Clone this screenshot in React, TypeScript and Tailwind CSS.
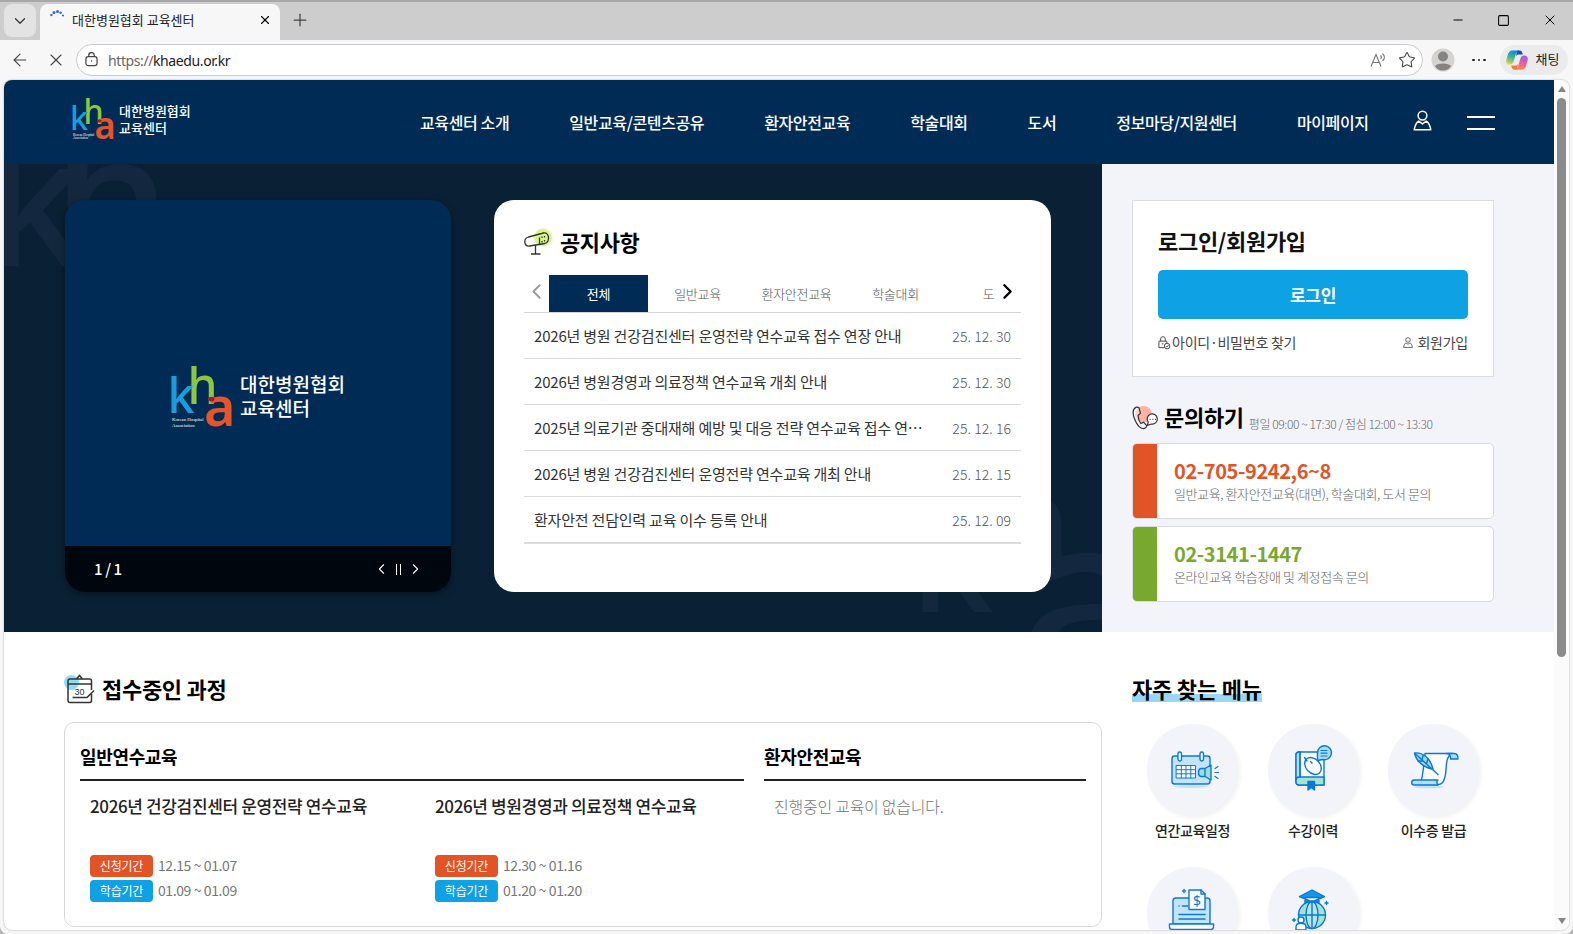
import { ReactNode, useState } from 'react';
import clsx from 'clsx';
import {
  ArrowLeft,
  ChevronDown,
  ChevronLeft,
  ChevronRight,
  Minus,
  Plus,
  Square,
  Star,
  X
} from 'lucide-react';

const navItems = [
  '교육센터 소개',
  '일반교육/콘텐츠공유',
  '환자안전교육',
  '학술대회',
  '도서',
  '정보마당/지원센터',
  '마이페이지'
];

const noticeTabs = ['전체', '일반교육', '환자안전교육', '학술대회', '도서'];

const notices = [
  { title: '2026년 병원 건강검진센터 운영전략 연수교육 접수 연장 안내', date: '25. 12. 30' },
  { title: '2026년 병원경영과 의료정책 연수교육 개최 안내', date: '25. 12. 30' },
  { title: '2025년 의료기관 중대재해 예방 및 대응 전략 연수교육 접수 연⋯', date: '25. 12. 16' },
  { title: '2026년 병원 건강검진센터 운영전략 연수교육 개최 안내', date: '25. 12. 15' },
  { title: '환자안전 전담인력 교육 이수 등록 안내', date: '25. 12. 09' }
];

const courses = [
  { title: '2026년 건강검진센터 운영전략 연수교육', apply: '12.15 ~ 01.07', study: '01.09 ~ 01.09' },
  { title: '2026년 병원경영과 의료정책 연수교육', apply: '12.30 ~ 01.16', study: '01.20 ~ 01.20' }
];

function UserIcon({ className }: { className?: string }) {
  return (
    <svg viewBox="0 0 20 22" className={className} fill="none" stroke="currentColor" strokeWidth="1.6">
      <circle cx="10" cy="5.8" r="4.6" />
      <path d="M6 11.600C3.600 13 2.200 15.600 1.200 20.800h17.600c-1-5.200-2.400-7.800-4.800-9.200L10 14.600z" strokeLinejoin="round" />
    </svg>
  );
}

function KhaMark({ className }: { className?: string }) {
  return (
    <svg viewBox="0 0 61 62" className={className} overflow="visible" fontFamily="'Noto Sans', sans-serif" fontWeight="500">
      <text transform="translate(15.500 39) scale(0.94 1)" fontSize="51" fill="#8dc63f">
        h
      </text>
      <text transform="translate(-4.500 48) scale(0.98 1)" fontSize="49" fill="#1b9ddb">
        k
      </text>
      <text transform="translate(32 61) scale(0.98 1)" fontSize="55" fontWeight="600" fill="#e4552a">
        a
      </text>
      <ellipse cx="39.500" cy="34" rx="3" ry="2.300" fill="#b5121b" />
      <g fontFamily="'Liberation Serif', serif" fontSize="4.800" fill="#fff">
        <text x="0" y="56">Korean Hospital</text>
        <text x="0" y="61.500">Association</text>
      </g>
    </svg>
  );
}

function TitleBar() {
  return (
    <div className="flex h-10 shrink-0 border-t-2 border-[#a9a7ac] bg-[#cdcdcd]">
      <div className="mt-0.5 ml-1 flex h-[33px] w-8 items-center justify-center rounded-lg bg-[#e3e3e3]">
        <ChevronDown className="h-[18px] w-[18px] text-[#333]" strokeWidth={1.6} />
      </div>
      <div className="mt-0.5 ml-1 flex h-9 w-60 items-center rounded-t-lg bg-[#f7f7f7] pl-2.5 pb-1">
        <svg viewBox="0 0 16 16" className="-mt-1.5 h-4 w-4" fill="#2f6fd0">
          <circle cx="1.400" cy="6" r="1.200" />
          <circle cx="4" cy="3.500" r="1.500" />
          <circle cx="7.500" cy="2.600" r="1.500" />
          <circle cx="10.600" cy="3.800" r="1.300" />
          <circle cx="13" cy="6.500" r="1.100" />
        </svg>
        <span className="ml-1.5 flex-1 text-[13px] text-[#222]">대한병원협회 교육센터</span>
        <X className="mr-2 h-3.5 w-3.5 text-black" strokeWidth={2} />
      </div>
      <Plus className="mt-2 ml-2.5 h-5 w-5 text-[#444]" strokeWidth={1.5} />
      <div className="ml-auto flex items-center gap-8 pr-[15px] pb-0.5 text-black">
        <Minus className="h-3.5 w-3.5" strokeWidth={1.7} />
        <Square className="h-[13px] w-[13px]" strokeWidth={1.9} />
        <X className="h-4 w-4" strokeWidth={1.5} />
      </div>
    </div>
  );
}

function AddressBar() {
  return (
    <div className="flex h-10 shrink-0 items-center bg-[#f7f7f7] text-[#444]">
      <ArrowLeft className="ml-2.5 h-5 w-5" strokeWidth={1.3} />
      <X className="ml-4 h-5 w-5" strokeWidth={1.3} />
      <div className="ml-2.5 flex h-8 w-[1347px] items-center rounded-full border border-[#c9cdd3] bg-white px-2">
        <svg viewBox="0 0 14 16" className="-mt-0.5 h-[15px] w-[13px]" fill="none" stroke="currentColor" strokeWidth="1.300">
          <rect x="1" y="5" width="12" height="9.500" rx="2.500" />
          <path d="M4 5V3.500a3 3 0 0 1 6 0V5" />
          <circle cx="7" cy="9.700" r=".8" fill="currentColor" stroke="none" />
        </svg>
        <span className="ml-2.5 font-['Noto_Sans'] text-[14px] tracking-[-0.4px] text-[#222]">
          <span className="text-[#666]">https://</span>khaedu.or.kr
        </span>
        <svg viewBox="0 0 18 16" className="ml-auto h-4 w-[18px] text-[#777]" fill="none" stroke="currentColor" strokeWidth="1.100">
          <path d="M1 14.500 6 2.500l5 12M2.700 10.500h6.600M10.500 3.500c1 1 1 2.500 0 3.500M12.500 1.500c2.500 2 2.500 5.500 0 7.500" />
        </svg>
        <Star className="-mr-0.5 ml-2.5 h-[18px] w-[18px]" strokeWidth={1.4} />
      </div>
      <svg viewBox="0 0 24 24" className="ml-2 h-6 w-6">
        <circle cx="12" cy="12" r="11.500" fill="#d5d3d0" />
        <circle cx="12" cy="8.500" r="5" fill="#868482" />
        <path d="M4 18c2-3.500 14-3.500 16 0-3 6-13 6-16 0z" fill="#868482" />
      </svg>
      <div className="ml-[17px] flex gap-[3px]">
        <i className="h-[2.500px] w-[2.500px] rounded-full bg-[#222]" />
        <i className="h-[2.500px] w-[2.500px] rounded-full bg-[#222]" />
        <i className="h-[2.500px] w-[2.500px] rounded-full bg-[#222]" />
      </div>
      <div className="ml-3.5 flex h-[30px] w-[68px] items-center rounded-full bg-[#ebebeb] pl-1.5">
        <svg viewBox="0 0 24 24" className="h-[22px] w-[22px]">
          <defs>
            <linearGradient id="cp1" x1="0.600" y1="0" x2="0.300" y2="1">
              <stop offset="0" stopColor="#1285d8" />
              <stop offset=".5" stopColor="#35b8a0" />
              <stop offset="1" stopColor="#f4d03f" />
            </linearGradient>
            <linearGradient id="cp2" x1="0.700" y1="0" x2="0.300" y2="1">
              <stop offset="0" stopColor="#8a63e8" />
              <stop offset=".5" stopColor="#ee5c9c" />
              <stop offset="1" stopColor="#ff8a4a" />
            </linearGradient>
          </defs>
          <path d="M7 1.500h7.500c-3 1-4 4-5 8-1.200 4.500-2 7.500-5 7.500C.5 17-.5 14.500.7 10.500l1.500-5C3 3 4.500 1.500 7 1.500z" fill="url(#cp1)" />
          <path d="M12.500 1.500h2.500c2 0 2.600 1.500 3.300 4.500H14c-1.500 0-2.500.5-3.300 2z" fill="#1c4fc4" />
          <path d="M17 22.500H9.500c3-1 4-4 5-8 1.200-4.500 2-7.500 5-7.500 4 0 5 2.500 3.800 6.500l-1.500 5c-.8 2.500-2.300 4-4.800 4z" fill="url(#cp2)" />
          <path d="M11.500 22.500H9c-2 0-2.600-1.500-3.300-4.500H10c1.500 0 2.500-.5 3.300-2z" fill="#f47a3c" />
        </svg>
        <span className="-mt-0.5 ml-2 text-[13px] text-[#222]">채팅</span>
      </div>
    </div>
  );
}

function SiteHeader() {
  return (
    <header className="flex h-[84px] items-center bg-[#002b55] text-white">
      <div className="ml-[69px] flex w-[347px] items-center">
        <KhaMark className="-mt-1.5 h-[42px] w-[41px]" />
        <div className="-mt-[7px] ml-[5px] text-[13px] leading-[17px] font-medium">
          대한병원협회
          <br />
          교육센터
        </div>
      </div>
      <nav className="flex gap-[60px] text-[16px] font-medium tracking-[-0.38px] whitespace-nowrap">
        {navItems.map((item) => (
          <a key={item} href="#">
            {item}
          </a>
        ))}
      </nav>
      <UserIcon className="-mt-[3px] ml-[44px] h-[21px] w-[19px]" />
      <button className="mt-px ml-[35px] flex h-[14px] w-[28px] flex-col justify-between">
        <span className="h-0.5 w-full bg-white" />
        <span className="h-0.5 w-full bg-white" />
      </button>
    </header>
  );
}

// Oversized wordmark that shows faintly behind the hero cards
function HeroWatermark() {
  return (
    <svg
      viewBox="0 0 1098 468"
      className="absolute inset-0 h-full w-full"
      fill="#13283f"
      fontFamily="'Noto Sans', sans-serif"
      fontWeight="500"
    >
      <text x="-19" y="102" fontSize="180">k</text>
      <text x="48" y="104" fontSize="190">h</text>
      <text x="906" y="448" fontSize="150">k</text>
      <text x="975" y="414" fontSize="150">h</text>
      <text x="1016" y="515" fontSize="230">a</text>
    </svg>
  );
}

function BannerCard() {
  return (
    <section className="relative flex h-[392px] w-[386px] flex-col overflow-hidden rounded-[20px] bg-[#002b55] text-white shadow-[0_2px_8px_rgba(0,0,0,0.45)]">
      <div className="mt-[165px] ml-[107px] flex items-center">
        <KhaMark className="h-[62px] w-[61px]" />
        <div className="-mt-px ml-[7px] text-[19px] leading-[24px] font-medium">
          대한병원협회
          <br />
          교육센터
        </div>
      </div>
      <div className="mt-auto flex h-[46px] items-center bg-[#00060d] pr-[27px] pl-[29px] text-[15px] font-medium">
        <span className="tracking-[-0.4px]">1 / 1</span>
        <div className="ml-auto flex items-center">
          <ChevronLeft className="h-5 w-[17px]" strokeWidth={1.5} />
          <div className="flex w-[17px] justify-center gap-[3px]">
            <span className="h-[11px] w-px bg-white" />
            <span className="h-[11px] w-px bg-white" />
          </div>
          <ChevronRight className="h-5 w-[17px]" strokeWidth={1.5} />
        </div>
      </div>
    </section>
  );
}

function NoticeCard() {
  const [activeTab, setActiveTab] = useState('전체');

  return (
    <section className="relative ml-[43px] h-[392px] w-[557px] rounded-[20px] bg-white px-[30px] pt-[26px]">
      <div className="flex h-8 items-center">
        <svg viewBox="0 0 28 28" className="h-7 w-7" fill="none" stroke="#333" strokeWidth="1.300">
          <circle cx="19" cy="9.500" r="9" fill="#dcf58a" stroke="none" />
          <path d="M4.500 9 19.500 5c6-1.300 6.800 8.800 1.300 10.500L5.500 18c-5.500.6-6.500-7.400-1-9zM15.500 9.500v6M18 8.500v1.500M18 13v1.500M20.500 8v1.500M20.500 12v1.500M11.500 17.500V26M7 26h9.500" />
        </svg>
        <h2 className="-mt-0.5 ml-2 text-[22px] font-bold tracking-[-0.4px]">공지사항</h2>
      </div>
      <div className="mt-[17px] flex h-[38px] items-center border-b border-[#d5d5d5] text-[13px] font-light tracking-[-0.3px] text-[#555]">
        <ChevronLeft className="-mt-1 h-[25px] w-[25px] text-[#999]" strokeWidth={1.8} />
        <div className="flex h-full w-[446px] overflow-hidden">
          {noticeTabs.map((tab) => (
            <button
              key={tab}
              onClick={() => setActiveTab(tab)}
              className={clsx(
                'h-full w-[99px] shrink-0',
                tab === activeTab && 'bg-[#002b55] font-normal text-white'
              )}
            >
              {tab}
            </button>
          ))}
        </div>
        <ChevronRight className="-mt-1 h-[25px] w-[25px] text-black" strokeWidth={2.3} />
      </div>
      <ul className="border-b border-[#dcdcdc]">
        {notices.map((n) => (
          <li key={n.title} className="flex h-[46px] items-center border-b border-[#dcdcdc] pt-0.5 pr-2.5 pl-2.5">
            <span className="text-[15px] tracking-[-0.2px] whitespace-nowrap text-[#333]">{n.title}</span>
            <span className="ml-auto text-[14px] font-light tracking-[0.05px] text-[#555]">{n.date}</span>
          </li>
        ))}
      </ul>
    </section>
  );
}

function ContactRow({ phone, desc, bar, text }: { phone: string; desc: string; bar: string; text: string }) {
  return (
    <div className="flex h-[76px] overflow-hidden rounded-[5px] border border-[#d9dade] bg-white">
      <div className={clsx('w-6', bar)} />
      <div className="ml-[17px] pt-3">
        <p className={clsx('text-[20px] leading-[30px] font-bold tracking-[-0.4px]', text)}>{phone}</p>
        <p className="text-[13px] leading-[15px] font-light tracking-[-0.4px] text-[#666]">{desc}</p>
      </div>
    </div>
  );
}

function SidePanel() {
  return (
    <aside className="w-[452px] bg-[#f3f4f9] pt-9 pl-[30px]">
      <div className="h-[177px] w-[362px] border border-[#dcdde1] bg-white px-[25px] pt-[23px]">
        <h2 className="text-[22px] leading-8 font-bold tracking-[-0.3px] text-[#111]">로그인/회원가입</h2>
        <button className="mt-3.5 h-[49px] w-full rounded-[5px] bg-[#0ea1e4] text-[17px] font-bold tracking-[-0.3px] text-white">
          로그인
        </button>
        <div className="mt-[13px] flex items-center text-[14px] tracking-[-0.25px] text-[#444]">
          <svg viewBox="0 0 14 15" className="h-[14px] w-[13px]" fill="none" stroke="currentColor">
            <path d="M7 12.500H1V5.500h8.500V8M2.800 5.500V3.200a2.500 2.500 0 0 1 5 0v2.300" />
            <circle cx="9.800" cy="10.800" r="3" />
            <path d="m8.500 10.800 1 1 1.800-2M4 8.500h2" />
          </svg>
          <a href="#" className="ml-px">아이디·비밀번호 찾기</a>
          <UserIcon className="ml-auto h-[11px] w-[10px]" />
          <a href="#" className="ml-1">회원가입</a>
        </div>
      </div>
      <div className="mt-[26px] flex h-[30px] items-center">
        <svg viewBox="0 0 28 26" className="h-6 w-[27px]" fill="none" stroke="#333" strokeWidth="1.300">
          <circle cx="12" cy="9" r="9" fill="#fdb3a1" stroke="none" />
          <path d="M3.500 1.500C0 3.500 0 9 2.500 15s6 10 10 9.500c1.500-.3 2.500-1.500 3-3l-3.500-4-3 1.500C7 16.500 6 13 6 10l2.500-2L7 2C6 1 5 .8 3.500 1.500z" fill="#f3f4f9" fillOpacity=".5" />
          <path d="M17 17.500a5.500 5.500 0 1 1 3.500 2L16 21z" fill="#fff" />
          <path d="M18.500 14.500h1M21.500 14.500h1M24.300 14.500h1" />
        </svg>
        <h2 className="-mt-1 ml-[5px] text-[22px] font-bold tracking-[-0.3px]">문의하기</h2>
        <span className="mt-3 ml-[5px] text-[12px] font-light tracking-[-0.4px] text-[#666]">
          평일 09:00 ~ 17:30 / 점심 12:00 ~ 13:30
        </span>
      </div>
      <div className="mt-2.5 flex w-[362px] flex-col gap-[7px]">
        <ContactRow
          phone="02-705-9242,6~8"
          desc="일반교육, 환자안전교육(대면), 학술대회, 도서 문의"
          bar="bg-[#e25426]"
          text="text-[#e25426]"
        />
        <ContactRow
          phone="02-3141-1447"
          desc="온라인교육 학습장애 및 계정접속 문의"
          bar="bg-[#78a92d]"
          text="text-[#78a92d]"
        />
      </div>
    </aside>
  );
}

function Period({ label, color, value }: { label: string; color: string; value: string }) {
  return (
    <div className="flex items-center">
      <span
        className={clsx(
          'flex h-[22px] w-[63px] items-center justify-center rounded-[4px] text-[12px] tracking-[-0.2px] text-white',
          color
        )}
      >
        {label}
      </span>
      <span className="ml-[5px] text-[14px] leading-[20px] tracking-[-0.4px] -mt-0.5 text-[#777]">{value}</span>
    </div>
  );
}

function CoursesSection() {
  return (
    <section className="w-[1038px]">
      <div className="flex h-8 items-center">
        <svg viewBox="0 0 31 30" className="-mt-px h-[30px] w-[31px]" fill="none" stroke="#333" strokeWidth="1.500">
          <circle cx="7.500" cy="8.500" r="7.500" fill="#8fdcf7" stroke="none" />
          <path d="M27.500 16V7a2 2 0 0 0-2-2H6a2 2 0 0 0-2 2v19.500a2 2 0 0 0 2 2h19.500a2 2 0 0 0 2-2V20M4 10h23.500M12.500 5 15.500 1.500 18.500 5M8.500 23.500H23l7-7" />
          <text x="10.500" y="20.500" fontSize="9" fontFamily="'Liberation Sans', sans-serif" fill="#333" stroke="none">
            30
          </text>
        </svg>
        <h2 className="-mt-0.5 ml-[7px] text-[22px] font-bold tracking-[-0.3px]">접수중인 과정</h2>
      </div>
      <div className="mt-[17px] flex h-[205px] gap-5 rounded-[10px] border border-[#d9d9d9] px-[15px] pt-4">
        <div className="w-[664px]">
          <h3 className="h-[42px] border-b-2 border-[#222] pt-[3px] text-[18px] leading-[28px] font-bold tracking-[-0.35px]">
            일반연수교육
          </h3>
          <div className="flex">
            {courses.map((c) => (
              <article key={c.title} className="w-[345px] shrink-0 pt-[13px] pl-2.5">
                <h4 className="h-[61px] text-[17px] leading-6 font-medium tracking-[-0.36px] text-[#222]">{c.title}</h4>
                <div className="space-y-[3px]">
                  <Period label="신청기간" color="bg-[#e25426]" value={c.apply} />
                  <Period label="학습기간" color="bg-[#0ea1e4]" value={c.study} />
                </div>
              </article>
            ))}
          </div>
        </div>
        <div className="w-[322px]">
          <h3 className="h-[42px] border-b-2 border-[#222] pt-[3px] text-[18px] leading-[28px] font-bold tracking-[-0.35px]">
            환자안전교육
          </h3>
          <p className="pt-[13px] pl-2.5 text-[16px] leading-6 font-light tracking-[-0.25px] text-[#777]">
            진행중인 교육이 없습니다.
          </p>
        </div>
      </div>
    </section>
  );
}

function MenuItem({ label, children }: { label?: string; children: ReactNode }) {
  return (
    <a href="#" className="flex w-[91px] flex-col items-center">
      <span className="flex h-[92px] w-[91px] items-center justify-center rounded-full bg-[#f3f4f9] shadow-[2px_2px_4px_rgba(0,0,0,0.06)]">
        <svg viewBox="0 0 60 60" className="h-[60px] w-[60px]" fill="none" stroke="#0b78d6" strokeWidth="1.400" strokeLinejoin="round" strokeLinecap="round">
          {children}
        </svg>
      </span>
      <span className="mt-[3px] h-12 text-[14px] leading-[22px] font-medium tracking-[-0.35px] whitespace-nowrap text-[#222]">
        {label}
      </span>
    </a>
  );
}

function QuickMenu() {
  return (
    <section className="ml-[30px]">
      <h2 className="flex h-8 items-center text-[22px] font-bold tracking-[-0.2px]">
        <span className="-mt-0.5 bg-[linear-gradient(transparent_22px,#9bd7f5_22px,#9bd7f5_30px,transparent_30px)]">
          자주 찾는 메뉴
        </span>
      </h2>
      <div className="mt-[19px] ml-[15px] grid grid-cols-[91px_91px_91px] gap-x-[29.500px]">
        <MenuItem label="연간교육일정">
          <ellipse cx="28" cy="46.500" rx="17" ry="1.500" fill="#bfe3fa" stroke="none" />
          <rect x="9" y="16" width="38" height="28" rx="2.500" fill="#c3e3f7" />
          <rect x="15" y="12" width="3.500" height="9" rx="1.700" fill="#fff" />
          <rect x="37" y="12" width="3.500" height="9" rx="1.700" fill="#fff" />
          <path d="M13.500 25.500h19V38h-19zM13.500 29.700h19M13.500 33.800h19M18.300 25.500V38M23 25.500V38M27.800 25.500V38" fill="#fff" strokeWidth="1" />
          <path d="M42 28.500 48 25v15l-6-3.500h-3.500c-4 0-4-8 0-8zM42 28.500v8" fill="#9adfd6" />
          <path d="m52 28.500 3-2M52 32.500h3.500M52 36.500l3 2" strokeWidth="1.200" />
        </MenuItem>
        <MenuItem label="수강이력">
          <path d="M16 12h25v33H16a3 3 0 0 1-3-3V15a3 3 0 0 1 3-3z" fill="#fff" />
          <path d="M13 40a3 3 0 0 1 3-3h25v8H16a3 3 0 0 1-3-3z" fill="#a5e3cf" />
          <path d="M13 15a3 3 0 0 1 3-3h1v25h-1a3 3 0 0 0-3 3z" fill="#b6e0fa" />
          <path d="M17 12v25" />
          <path d="M25 41.500h6.500V50l-3.200-2.500L25 50z" fill="#0b78d6" />
          <ellipse cx="30" cy="26" rx="7" ry="9.500" transform="rotate(-43 30 26)" fill="#fff" />
          <path d="m21.500 17.500 2.500 3.500M27.500 21.500l1.500 1.500" />
          <path d="M34.500 20.500v-7.500a7 7 0 1 1 5 6.500z" fill="#a9def9" />
          <path d="M38 10.500h6M38 13.200h6M38 16h6" strokeWidth="1.200" />
        </MenuItem>
        <MenuItem label="이수증 발급">
          <ellipse cx="25" cy="47" rx="15" ry="1.500" fill="#bfe3fa" stroke="none" />
          <path d="M21 13.500h28c-5 1-6 5-6.500 10-.7 8-.5 21-8.500 21H16c3-6 4-22 5-31z" fill="#fff" />
          <path d="M49 13.500h1.500c2.500 0 3.500 2 3.500 5.500h-7.500c.2-3-.5-5.500-4-5.500z" fill="#a9def9" />
          <path d="M10 40h24c-1.500 1-1.500 3.500 0 5H10c-3 0-3-5 0-5z" fill="#b6e0fa" />
          <path d="M10.500 13c8-1 16 5 18.500 16-9-1-17-8-18.500-16z" fill="#9bdcef" />
          <path d="m11 13.500 23 21M18 20l1-4.500M22.500 24l1.500-5.500M19 21h-5" />
        </MenuItem>
        <MenuItem>
          <path d="M10 41V18a3 3 0 0 1 3-3h31a3 3 0 0 1 3 3v23z" fill="#c3e3f7" />
          <path d="M6.500 41h44v3a2.500 2.500 0 0 1-2.500 2.500H9A2.500 2.500 0 0 1 6.500 44z" fill="#fff" />
          <path d="M26 7h12l4 4v15.500H26z" fill="#fff" />
          <path d="M38 7v4h4M16 23h.1M19.500 23h5M16 31.500h26M16 36h26" />
          <path d="M21 6.500v3M19.500 8h3" />
          <text x="30" y="23" fontSize="14" fontFamily="'Noto Sans', sans-serif" fill="#0b78d6" stroke="none">$</text>
        </MenuItem>
        <MenuItem>
          <circle cx="29" cy="32" r="13.500" fill="#a5e3cf" />
          <ellipse cx="29" cy="32" rx="6" ry="13.500" fill="#b6e6f0" />
          <path d="M29 18.500v27M15.500 32h27" />
          <path d="M22 14.500v5c4-2 10-2 14 0v-5zM29 7l12.500 6.500L29 19l-12.500-5.500z" fill="#1596ea" />
          <path d="M43.500 18.500v3M42 20h3M11 35.500v3M9.500 37h3" />
          <circle cx="18" cy="37" r="3" fill="#fff" />
          <path d="M13 47v-3c0-5 10-5 10 0v3z" fill="#fff" />
        </MenuItem>
      </div>
    </section>
  );
}

function Scrollbar() {
  return (
    <div className="flex w-[15px] flex-col items-center bg-[#fbfbfb]">
      <svg viewBox="0 0 8 6" className="mt-1.5 h-1.5 w-2" fill="#868686">
        <path d="M4 0 8 6H0z" />
      </svg>
      <div className="mt-1.5 h-[559px] w-[9px] rounded-full bg-[#8b8b8b]" />
      <svg viewBox="0 0 8 6" className="mt-auto mb-1.5 h-1.5 w-2" fill="#868686">
        <path d="M4 6 8 0H0z" />
      </svg>
    </div>
  );
}

export default function App() {
  return (
    <div className="h-[934px] w-[1573px] overflow-hidden bg-[#b5b5b5] font-['Noto_Sans_CJK_KR',sans-serif] text-black">
      <div className="flex h-full flex-col overflow-hidden rounded-b-lg bg-[#f7f7f7]">
        <TitleBar />
        <AddressBar />
        <div className="mx-1 flex h-[850px] shrink-0 overflow-hidden rounded-lg bg-white shadow-[0_0_2px_rgba(0,0,0,0.35)]">
          <main className="w-[1550px] shrink-0">
            <SiteHeader />
            <div className="flex h-[468px]">
              <div className="relative w-[1098px] overflow-hidden bg-[#0a2135]">
                <HeroWatermark />
                <div className="relative flex pt-9 pl-[61px]">
                  <BannerCard />
                  <NoticeCard />
                </div>
              </div>
              <SidePanel />
            </div>
            <div className="flex pt-[41px] pl-[60px]">
              <CoursesSection />
              <QuickMenu />
            </div>
          </main>
          <Scrollbar />
        </div>
      </div>
    </div>
  );
}
